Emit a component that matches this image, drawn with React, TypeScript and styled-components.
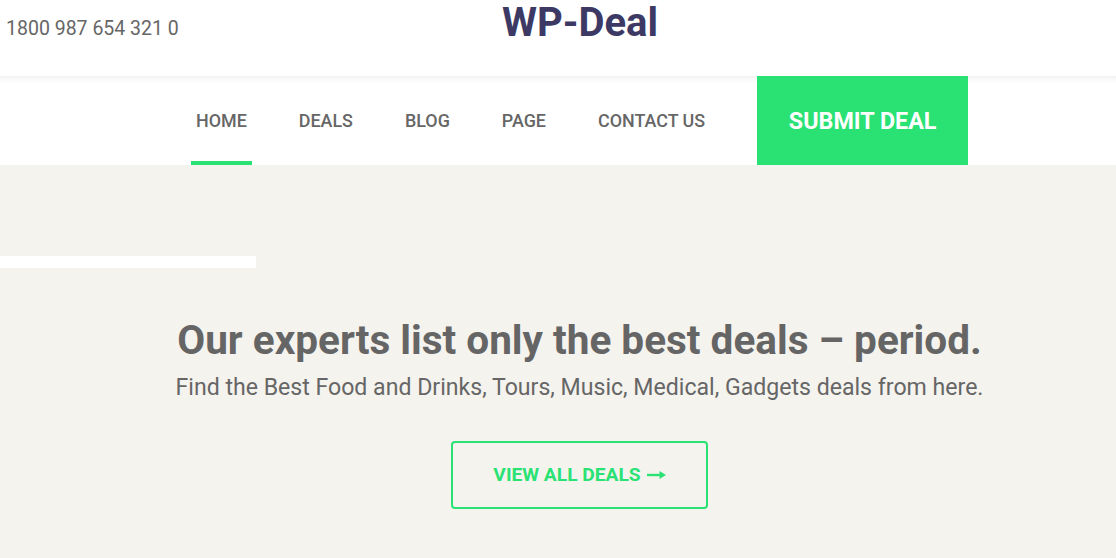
import React from "react";
import styled, { createGlobalStyle } from "styled-components";

const GREEN = "#2ae274";

const Global = createGlobalStyle`
  html, body { margin: 0; padding: 0; }
  body {
    font-family: Roboto, "Liberation Sans", Arial, sans-serif;
    background: #f5f3ee;
    overflow: hidden;
  }
  * { box-sizing: border-box; }
`;

const Page = styled.div`
  width: 1116px;
  height: 558px;
  display: flex;
  flex-direction: column;
`;

const TopBar = styled.header`
  height: 76px;
  background: #fff;
  display: grid;
  grid-template-columns: 1fr auto 1fr;
  align-items: center;
  padding-left: 6px;
`;

const Phone = styled.div`
  font-size: 19.5px;
  color: #666;
  margin-top: -19px;
`;

const Logo = styled.h1`
  margin: 0;
  margin-top: -32px;
  margin-left: 38px;
  font-size: 40px;
  font-weight: 700;
  color: #3c3a64;
`;

const NavBar = styled.nav`
  height: 89px;
  background: #fff;
  display: flex;
  align-items: stretch;
  padding-left: 191px;
  box-shadow: inset 0 7px 6px -5px rgba(0, 0, 0, 0.07);
`;

const NavList = styled.ul`
  list-style: none;
  margin: 0;
  padding: 0;
  display: flex;
  gap: 42px;
`;

const NavItem = styled.li<{ $active?: boolean }>`
  display: flex;
  align-items: center;
  padding: 7px 5px 3px;
  font-size: 17.9px;
  font-weight: 500;
  color: #666;
  border-bottom: 4px solid ${(p) => (p.$active ? GREEN : "transparent")};
`;

const SubmitButton = styled.a`
  margin-left: 47px;
  width: 211px;
  background: ${GREEN};
  color: #fff;
  font-size: 23.3px;
  font-weight: 700;
  display: flex;
  align-items: center;
  justify-content: center;
  text-decoration: none;
  padding-top: 1px;
`;

const Hero = styled.section`
  flex: 1;
  background: #f5f3ee;
  display: flex;
  flex-direction: column;
  padding-top: 91px;
`;

const WhiteStrip = styled.div`
  width: 256px;
  height: 12px;
  background: #fff;
`;

const HeroContent = styled.div`
  margin-left: 43px;
  display: flex;
  flex-direction: column;
  align-items: center;
  padding-top: 49px;
`;

const Title = styled.h2`
  margin: 0;
  font-size: 40.5px;
  font-weight: 700;
  color: #656565;
  line-height: 46px;
`;

const Subtitle = styled.p`
  margin: 0;
  margin-top: 11px;
  font-size: 23.1px;
  color: #666;
  line-height: 28px;
`;

const OutlineButton = styled.a`
  margin-top: 39px;
  width: 257px;
  height: 68px;
  border: 2px solid ${GREEN};
  border-radius: 4px;
  color: ${GREEN};
  font-size: 19.2px;
  font-weight: 700;
  display: flex;
  align-items: center;
  justify-content: center;
  gap: 6px;
  text-decoration: none;
  padding-bottom: 1px;
`;

const Arrow = () => (
  <svg width="19" height="10" viewBox="0 0 19 10" aria-hidden>
    <path d="M0 5h15" stroke={GREEN} strokeWidth="2.4" />
    <path d="M12.5 1l6.5 4-6.5 4z" fill={GREEN} />
  </svg>
);

const navItems = ["HOME", "DEALS", "BLOG", "PAGE", "CONTACT US"];

export default function App() {
  return (
    <>
      <Global />
      <Page>
        <TopBar>
          <Phone>1800 987 654 321 0</Phone>
          <Logo>WP-Deal</Logo>
          <div />
        </TopBar>
        <NavBar>
          <NavList>
            {navItems.map((n, i) => (
              <NavItem key={n} $active={i === 0}>
                {n}
              </NavItem>
            ))}
          </NavList>
          <SubmitButton>SUBMIT DEAL</SubmitButton>
        </NavBar>
        <Hero>
          <WhiteStrip />
          <HeroContent>
            <Title>Our experts list only the best deals – period.</Title>
            <Subtitle>
              Find the Best Food and Drinks, Tours, Music, Medical, Gadgets deals from here.
            </Subtitle>
            <OutlineButton>
              VIEW ALL DEALS <Arrow />
            </OutlineButton>
          </HeroContent>
        </Hero>
      </Page>
    </>
  );
}
